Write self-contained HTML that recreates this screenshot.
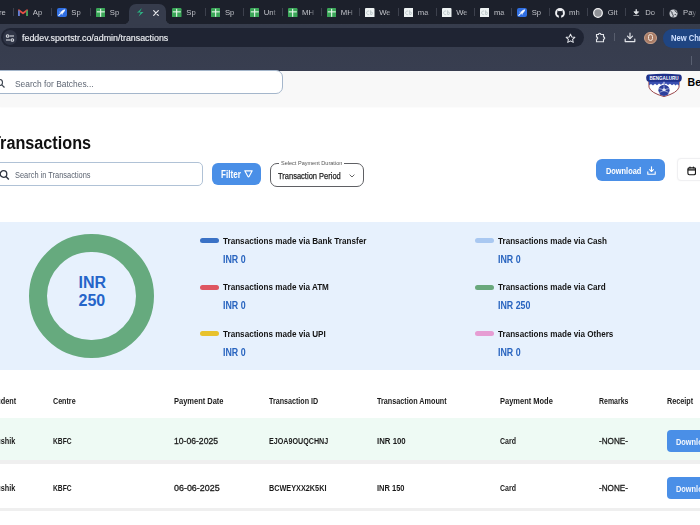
<!DOCTYPE html>
<html><head><meta charset="utf-8">
<style>
*{box-sizing:border-box;margin:0;padding:0}
html,body{width:700px;height:525px;overflow:hidden;background:#fff;font-family:"Liberation Sans",sans-serif;position:relative}
.a{position:absolute}
.t{position:absolute;white-space:nowrap;line-height:1.117;transform-origin:0 0}
.sep{position:absolute;width:1px;top:8.3px;height:7.8px;background:#3d414d}
.fav{position:absolute;top:7px;width:10px;height:10px}
.tl{position:absolute;top:7.6px;font-size:7.7px;line-height:10px;color:#c4c6cc;white-space:nowrap;width:14px;overflow:hidden;-webkit-mask-image:linear-gradient(90deg,#000 55%,transparent 100%)}
.leg{position:absolute;width:19px;height:5px;border-radius:3px}
</style></head><body>
<!-- chrome -->
<div class="a" style="left:0;top:0;width:700px;height:24px;background:#1c202b"></div>
<div class="a" style="left:0;top:24px;width:700px;height:46.5px;background:linear-gradient(#363c4c,#383e50)"></div>
<!-- active tab -->
<div class="a" style="left:128.5px;top:4px;width:37.5px;height:21px;background:#363c4c;border-radius:7px 7px 0 0"></div>
<div class="a" style="left:123.5px;top:19px;width:5px;height:5.2px;background:radial-gradient(circle at 0 0,transparent 4.8px,#363c4c 5.3px)"></div>
<div class="a" style="left:166px;top:19px;width:5px;height:5.2px;background:radial-gradient(circle at 100% 0,transparent 4.8px,#363c4c 5.3px)"></div>
<div class="sep" style="left:12.5px"></div>
<div class="sep" style="left:51px"></div>
<div class="sep" style="left:89.5px"></div>
<div class="sep" style="left:204.6px"></div>
<div class="sep" style="left:243.4px"></div>
<div class="sep" style="left:281.8px"></div>
<div class="sep" style="left:320.5px"></div>
<div class="sep" style="left:358.9px"></div>
<div class="sep" style="left:397.5px"></div>
<div class="sep" style="left:435.9px"></div>
<div class="sep" style="left:473.6px"></div>
<div class="sep" style="left:511.4px"></div>
<div class="sep" style="left:548.8px"></div>
<div class="sep" style="left:587.4px"></div>
<div class="sep" style="left:625px"></div>
<div class="sep" style="left:662.7px"></div>
<svg class="a" style="left:18.3px;top:8.5px" width="10" height="7.5" viewBox="0 0 10 7.5"><path d="M0.9 7V1.2L5 4.3 9.1 1.2V7" fill="none" stroke="#e44f44" stroke-width="1.7" stroke-linejoin="round"/><path d="M0.9 7V1.6" stroke="#5b7fd6" stroke-width="1.8"/><path d="M9.1 7V1.6" stroke="#3aa35a" stroke-width="1.8"/></svg>
<div class="tl" style="left:32.8px">Ap</div>
<svg class="a" style="left:56.8px;top:7.9px" width="10" height="9" viewBox="0 0 10 9"><rect x="0" y="0" width="10" height="9" rx="2" fill="#2f6ee2"/><path d="M8.2 1.2 Q5.6 1.4 4.2 3.4 L3.2 4.6 L5 6.2 L6.2 5.1 Q8.2 3.5 8.2 1.2 Z" fill="#f4f8ff"/><path d="M3.6 5.6 L1.8 7.4" stroke="#f4f8ff" stroke-width="1.1" stroke-linecap="round"/><path d="M3.4 3.6 L2.2 3.8 L2.8 4.8z M5.6 6.1 L5.4 7.2 L4.4 6.6z" fill="#cfdcf8"/></svg>
<div class="tl" style="left:71.3px">Sp</div>
<svg class="a" style="left:95.7px;top:7.7px" width="9.5" height="9.5" viewBox="0 0 9.5 9.5"><rect x="0" y="0" width="9.5" height="9.5" rx="1.2" fill="#3ba759"/><rect x="4.1" y="0.8" width="1.1" height="8" fill="#e8f7ea"/><rect x="0.8" y="3.3" width="8" height="1.1" fill="#e8f7ea"/></svg>
<div class="tl" style="left:109.8px">Sp</div>
<svg class="a" style="left:135.5px;top:7.6px" width="8.5" height="9" viewBox="0 0 8.5 9"><path d="M5.6 0.6L1.2 4.6h3.5L2.6 8.4l4.9-4.3H3.9z" fill="#2fb586"/><path d="M5.6 0.6L1.2 4.6" stroke="#1f8f6a" stroke-width="0.6"/></svg>
<svg class="a" style="left:152.5px;top:9.6px" width="6" height="6" viewBox="0 0 6 6"><path d="M0.7 0.7l4.6 4.6M5.3 0.7l-4.6 4.6" stroke="#e6e7ea" stroke-width="1.2" stroke-linecap="round"/></svg>
<svg class="a" style="left:172.2px;top:7.7px" width="9.5" height="9.5" viewBox="0 0 9.5 9.5"><rect x="0" y="0" width="9.5" height="9.5" rx="1.2" fill="#3ba759"/><rect x="4.1" y="0.8" width="1.1" height="8" fill="#e8f7ea"/><rect x="0.8" y="3.3" width="8" height="1.1" fill="#e8f7ea"/></svg>
<div class="tl" style="left:186.3px">Sp</div>
<svg class="a" style="left:210.8px;top:7.7px" width="9.5" height="9.5" viewBox="0 0 9.5 9.5"><rect x="0" y="0" width="9.5" height="9.5" rx="1.2" fill="#3ba759"/><rect x="4.1" y="0.8" width="1.1" height="8" fill="#e8f7ea"/><rect x="0.8" y="3.3" width="8" height="1.1" fill="#e8f7ea"/></svg>
<div class="tl" style="left:224.9px">Sp</div>
<svg class="a" style="left:249.6px;top:7.7px" width="9.5" height="9.5" viewBox="0 0 9.5 9.5"><rect x="0" y="0" width="9.5" height="9.5" rx="1.2" fill="#3ba759"/><rect x="4.1" y="0.8" width="1.1" height="8" fill="#e8f7ea"/><rect x="0.8" y="3.3" width="8" height="1.1" fill="#e8f7ea"/></svg>
<div class="tl" style="left:263.7px">Unt</div>
<svg class="a" style="left:288.0px;top:7.7px" width="9.5" height="9.5" viewBox="0 0 9.5 9.5"><rect x="0" y="0" width="9.5" height="9.5" rx="1.2" fill="#3ba759"/><rect x="4.1" y="0.8" width="1.1" height="8" fill="#e8f7ea"/><rect x="0.8" y="3.3" width="8" height="1.1" fill="#e8f7ea"/></svg>
<div class="tl" style="left:302.1px">MH</div>
<svg class="a" style="left:326.7px;top:7.7px" width="9.5" height="9.5" viewBox="0 0 9.5 9.5"><rect x="0" y="0" width="9.5" height="9.5" rx="1.2" fill="#3ba759"/><rect x="4.1" y="0.8" width="1.1" height="8" fill="#e8f7ea"/><rect x="0.8" y="3.3" width="8" height="1.1" fill="#e8f7ea"/></svg>
<div class="tl" style="left:340.8px">MH</div>
<svg class="a" style="left:365.0px;top:7.5px" width="9.5" height="9.5" viewBox="0 0 9.5 9.5"><rect x="0" y="0" width="9.5" height="9.5" rx="1" fill="#eef3f4"/><path d="M4.2 3.2a1.8 1.8 0 1 0 0 3.2" fill="none" stroke="#b9c4c7" stroke-width="0.9"/><path d="M5.6 2.3v4.2a1.3 1.3 0 1 0 0-2.4" fill="none" stroke="#b9c4c7" stroke-width="0.9"/></svg>
<div class="tl" style="left:379.2px">We</div>
<svg class="a" style="left:403.6px;top:7.5px" width="9.5" height="9.5" viewBox="0 0 9.5 9.5"><rect x="0" y="0" width="9.5" height="9.5" rx="1" fill="#eef3f4"/><path d="M4.2 3.2a1.8 1.8 0 1 0 0 3.2" fill="none" stroke="#b9c4c7" stroke-width="0.9"/><path d="M5.6 2.3v4.2a1.3 1.3 0 1 0 0-2.4" fill="none" stroke="#b9c4c7" stroke-width="0.9"/></svg>
<div class="tl" style="left:417.8px">ma</div>
<svg class="a" style="left:442.0px;top:7.5px" width="9.5" height="9.5" viewBox="0 0 9.5 9.5"><rect x="0" y="0" width="9.5" height="9.5" rx="1" fill="#eef3f4"/><path d="M4.2 3.2a1.8 1.8 0 1 0 0 3.2" fill="none" stroke="#b9c4c7" stroke-width="0.9"/><path d="M5.6 2.3v4.2a1.3 1.3 0 1 0 0-2.4" fill="none" stroke="#b9c4c7" stroke-width="0.9"/></svg>
<div class="tl" style="left:456.2px">We</div>
<svg class="a" style="left:479.7px;top:7.5px" width="9.5" height="9.5" viewBox="0 0 9.5 9.5"><rect x="0" y="0" width="9.5" height="9.5" rx="1" fill="#eef3f4"/><path d="M4.2 3.2a1.8 1.8 0 1 0 0 3.2" fill="none" stroke="#b9c4c7" stroke-width="0.9"/><path d="M5.6 2.3v4.2a1.3 1.3 0 1 0 0-2.4" fill="none" stroke="#b9c4c7" stroke-width="0.9"/></svg>
<div class="tl" style="left:493.9px">ma</div>
<svg class="a" style="left:517.2px;top:7.9px" width="10" height="9" viewBox="0 0 10 9"><rect x="0" y="0" width="10" height="9" rx="2" fill="#2f6ee2"/><path d="M8.2 1.2 Q5.6 1.4 4.2 3.4 L3.2 4.6 L5 6.2 L6.2 5.1 Q8.2 3.5 8.2 1.2 Z" fill="#f4f8ff"/><path d="M3.6 5.6 L1.8 7.4" stroke="#f4f8ff" stroke-width="1.1" stroke-linecap="round"/><path d="M3.4 3.6 L2.2 3.8 L2.8 4.8z M5.6 6.1 L5.4 7.2 L4.4 6.6z" fill="#cfdcf8"/></svg>
<div class="tl" style="left:531.7px">Sp</div>
<svg class="a" style="left:555.0px;top:7.6px" width="10" height="10" viewBox="0 0 10 10"><circle cx="5" cy="5" r="4.9" fill="#f0f1f4"/><path d="M2.6 2.3 L3.6 3.3 Q5 2.8 6.4 3.3 L7.4 2.3 Q7.8 3.3 7.6 4.2 Q8 4.8 8 5.4 Q8 7.2 6.2 7.6 V10 H3.8 V7.6 Q2 7.2 2 5.4 Q2 4.8 2.4 4.2 Q2.2 3.3 2.6 2.3 Z" fill="#1c202b"/><path d="M1.3 7.4 Q2.5 7.6 3.2 8.6" stroke="#f0f1f4" stroke-width="0.8" fill="none"/></svg>
<div class="tl" style="left:569.1px">mh</div>
<svg class="a" style="left:592.8px;top:7.7px" width="10" height="10" viewBox="0 0 10 10"><circle cx="5" cy="5" r="4.3" fill="#8f9196" stroke="#f2f2f4" stroke-width="1.3"/></svg>
<div class="tl" style="left:607.7px">Git</div>
<svg class="a" style="left:633.0px;top:8.7px" width="6.5" height="7.5" viewBox="0 0 6.5 7.5"><path d="M3.25 0.3v4" stroke="#e4e6ea" stroke-width="1.3"/><path d="M0.9 2.8l2.35 2.5 2.35-2.5z" fill="#e4e6ea" stroke="#e4e6ea" stroke-width="0.8" stroke-linejoin="round"/><rect x="0.4" y="6.4" width="5.7" height="1.1" fill="#e4e6ea"/></svg>
<div class="tl" style="left:645.3px">Do</div>
<svg class="a" style="left:669.3px;top:8.8px" width="9" height="9" viewBox="0 0 9 9"><circle cx="4.5" cy="4.5" r="4" fill="#cfd2d8"/><path d="M1.6 2.6c1.2.2 1.8.9 1.6 1.8-.2.8.8 1.1 1 1.9.1.6-.2 1.3-.4 2M6.2 1c-.4.8-.1 1.4.6 1.6.7.2 1.1.5 1.1 1.1M5.6 5.6c.6-.2 1.3 0 1.7.6" fill="none" stroke="#1c202b" stroke-width="0.9"/></svg>
<div class="tl" style="left:683.0px">Pay</div>
<div class="tl" style="left:-1px;width:10px">re</div>
<!-- omnibox -->
<div class="a" style="left:0.5px;top:28px;width:583px;height:19px;background:#1f2433;border-radius:9.5px"></div>
<div class="a" style="left:2.8px;top:30.3px;width:14.5px;height:14.5px;border-radius:50%;background:#2f3546"></div>
<svg class="a" style="left:5px;top:32.5px" width="10" height="10" viewBox="0 0 10 10"><g stroke="#d5d8de" stroke-width="1.1" fill="none"><line x1="4.6" y1="3" x2="9" y2="3"/><circle cx="2.6" cy="3" r="1.3"/><line x1="1" y1="7" x2="5.4" y2="7"/><circle cx="7.4" cy="7" r="1.3"/></g></svg>
<!-- star -->
<svg class="a" style="left:564.5px;top:32.5px" width="11" height="11" viewBox="0 0 24 24"><path d="M12 2.5l2.9 6.2 6.6.7-4.9 4.5 1.4 6.6L12 17.2l-6 3.3 1.4-6.6-4.9-4.5 6.6-.7z" fill="none" stroke="#e3e5ea" stroke-width="2.2" stroke-linejoin="round"/></svg>
<!-- extension -->
<svg class="a" style="left:593.5px;top:32px" width="12" height="11" viewBox="0 0 12 11"><path d="M2.5 2.5h2a1.2 1.2 0 0 1 2.4 0h2.6v2.4a1.2 1.2 0 0 1 0 2.4v2.4H2.5V7.3a1.2 1.2 0 0 0 0-2.4z" fill="none" stroke="#e3e5ea" stroke-width="1.1"/></svg>
<div class="a" style="left:614px;top:32.5px;width:1px;height:8.5px;background:#585e6d"></div>
<!-- download -->
<svg class="a" style="left:624px;top:32px" width="12" height="11" viewBox="0 0 12 11"><g stroke="#e3e5ea" stroke-width="1.2" fill="none" stroke-linecap="round" stroke-linejoin="round"><line x1="6" y1="1" x2="6" y2="6.5"/><polyline points="3.5,4.2 6,6.7 8.5,4.2"/><polyline points="1.2,7 1.2,9.6 10.8,9.6 10.8,7"/></g></svg>
<!-- avatar -->
<div class="a" style="left:644.2px;top:31.6px;width:12.6px;height:12.6px;border-radius:50%;background:#a97c66;border:1px solid #c9a08a"></div>
<div class="a" style="left:648.2px;top:34.2px;width:5px;height:7px;border:1.3px solid #f3e6dc;border-radius:2.5px"></div>
<!-- new chrome -->
<div class="a" style="left:663.1px;top:29.3px;width:60px;height:18.4px;background:#1f4582;border-radius:9.2px"></div>
<div class="a" style="left:690.5px;top:56px;width:1px;height:8.6px;background:#596071"></div>
<!-- page -->
<div class="a" style="left:0;top:70.5px;width:700px;height:36.5px;background:#f8f8f8;box-shadow:0 0.5px 1.5px rgba(0,0,0,0.04)"></div>
<div class="a" style="left:-20px;top:69.5px;width:303px;height:24.5px;background:#fff;border:1px solid #a4b6cb;border-radius:7px"></div>
<svg class="a" style="left:-4px;top:78.5px" width="10" height="9" viewBox="0 0 10 9"><circle cx="3.5" cy="3.5" r="3" fill="none" stroke="#3d4450" stroke-width="1.1"/><line x1="5.8" y1="5.8" x2="8.5" y2="8.5" stroke="#3d4450" stroke-width="1.2"/></svg>
<svg class="a" style="left:644px;top:70px" width="40" height="30" viewBox="0 0 40 30">
<path d="M4.8 10.5 L5 17.2 Q6.5 22.8 20 26.6 Q33.5 22.8 35 17.2 L35.2 10.5 Z" fill="#fff" stroke="#8f3238" stroke-width="0.9"/>
<path d="M5 10.8 H35 V15.4 L33 14.2 L31.5 15.6 L30 14 L28 15.2 L26 13.8 L24 15 L22 13.4 L20.5 14.8 L19 13.2 L17 14.8 L15 13.5 L13 15.2 L11 13.8 L9 15.4 L7 14 L5 15.2 Z" fill="#3a4fb0"/>
<path d="M4.5 4.6 Q20 2.8 35.5 4.6 Q37.8 4.9 37.8 7.8 Q37.8 11.4 35.5 11.8 H4.5 Q2.2 11.4 2.2 7.8 Q2.2 4.9 4.5 4.6 Z" fill="#1f318a"/>
<text x="20" y="9.9" text-anchor="middle" font-family="Liberation Sans" font-weight="700" font-size="5.3" fill="#ffffff" textLength="29" lengthAdjust="spacingAndGlyphs">BENGALURU</text>
<rect x="19.5" y="11.8" width="1" height="2.6" fill="#e9ecf8"/>
<circle cx="20" cy="20.3" r="5.6" fill="#2d3f9c"/>
<path d="M18.1 19.3 L20 18.1 L21.9 19.3 L21.3 21.3 H18.7 Z" fill="#e6eaf8"/>
<path d="M15.4 22.4 Q17 21.6 18.7 21.3 M24.6 22.4 Q23 21.6 21.3 21.3 M20 18.1 V15.4 M18.1 19.3 L15.2 18.6 M21.9 19.3 L24.8 18.6" stroke="#e6eaf8" stroke-width="0.6" fill="none"/>
</svg>

<!-- filter row -->
<div class="a" style="left:-20px;top:162px;width:222.8px;height:23.5px;border:1px solid #b0c2d6;border-radius:5px;background:#fff"></div>
<svg class="a" style="left:-1px;top:169.5px" width="11" height="10" viewBox="0 0 11 10"><circle cx="4.5" cy="4" r="3.3" fill="none" stroke="#2e3440" stroke-width="1.3"/><line x1="7" y1="6.5" x2="9.8" y2="9.4" stroke="#2e3440" stroke-width="1.4"/></svg>
<div class="a" style="left:211.7px;top:162.6px;width:49.3px;height:22.8px;background:#4a8fe7;border-radius:6px"></div>
<svg class="a" style="left:243.6px;top:169.8px" width="9" height="8" viewBox="0 0 9 8"><path d="M0.8 0.8h7.4L5.2 6.2Q4.5 7.4 3.8 6.2z" fill="none" stroke="#fff" stroke-width="1.15" stroke-linejoin="round"/></svg>
<div class="a" style="left:270.2px;top:163px;width:94.1px;height:23.5px;border:1.2px solid #5f6064;border-radius:7px"></div>
<div class="a" style="left:279px;top:161px;width:65px;height:4px;background:#fff"></div>
<svg class="a" style="left:348.5px;top:174px" width="6" height="4" viewBox="0 0 6 4"><polyline points="0.6,0.6 3,3 5.4,0.6" fill="none" stroke="#666" stroke-width="1"/></svg>
<div class="a" style="left:596.3px;top:159.4px;width:68.3px;height:21.6px;background:#4a8fe7;border-radius:6px"></div>
<svg class="a" style="left:646.5px;top:165.5px" width="9" height="9" viewBox="0 0 9 9"><g stroke="#fff" stroke-width="1.1" fill="none" stroke-linecap="round" stroke-linejoin="round"><line x1="4.5" y1="0.8" x2="4.5" y2="5.3"/><polyline points="2.6,3.6 4.5,5.5 6.4,3.6"/><polyline points="0.8,5.8 0.8,8.2 8.2,8.2 8.2,5.8"/></g></svg>
<div class="a" style="left:677.2px;top:158.4px;width:40px;height:23px;background:#fff;border:1px solid #f0f0f2;border-radius:4px;box-shadow:0 0 1.5px rgba(0,0,0,0.05)"></div>
<svg class="a" style="left:686.8px;top:166px" width="9.5" height="9.5" viewBox="0 0 9.5 9.5"><g stroke="#151515" fill="none"><rect x="0.9" y="1.9" width="7.6" height="6.8" rx="1.4" stroke-width="1.15"/><line x1="0.9" y1="3.9" x2="8.5" y2="3.9" stroke-width="1.3"/><line x1="3" y1="0.6" x2="3" y2="2.4" stroke-width="1"/><line x1="6.4" y1="0.6" x2="6.4" y2="2.4" stroke-width="1"/></g></svg>
<!-- summary panel -->
<div class="a" style="left:0;top:222px;width:700px;height:148.2px;background:#e7f1fd"></div>
<div class="a" style="left:29.4px;top:233.6px;width:124.7px;height:124.7px;border-radius:50%;background:transparent;border:18.7px solid #66aa7e"></div>
<div class="leg" style="left:199.5px;top:238px;background:#3a72c6"></div>
<div class="leg" style="left:199.5px;top:284.7px;background:#de5661"></div>
<div class="leg" style="left:199.5px;top:331px;background:#e8c22d"></div>
<div class="leg" style="left:474.8px;top:238px;background:#a9c8f1"></div>
<div class="leg" style="left:474.8px;top:284.7px;background:#69a87c"></div>
<div class="leg" style="left:474.8px;top:331px;background:#e69dd3"></div>
<!-- table -->
<div class="a" style="left:0;top:418.2px;width:700px;height:42px;background:#eefaf4"></div>
<div class="a" style="left:0;top:460.2px;width:700px;height:3.8px;background:#efefef"></div>
<div class="a" style="left:0;top:508.2px;width:700px;height:3px;background:#efefef"></div>
<div class="a" style="left:666.5px;top:429.8px;width:50px;height:22.6px;background:#4a8fe7;border-radius:4px"></div>
<div class="a" style="left:666.5px;top:476.8px;width:50px;height:22.6px;background:#4a8fe7;border-radius:4px"></div>
<span class="t" style="left:22px;top:33.16px;font-size:9px;font-weight:400;color:#eceef2;transform:scaleX(0.9858);-webkit-text-stroke:0.15px #eceef2">feddev.sportstr.co/admin/transactions</span>
<span class="t" style="left:671px;top:32.80px;font-size:9.5px;font-weight:700;color:#cfe0ff;transform:scaleX(0.80)">New Chrome</span>
<span class="t" style="left:15px;top:77.64px;font-size:9.9px;font-weight:400;color:#5e6673;transform:scaleX(0.8524);">Search for Batches...</span>
<span class="t" style="left:687.6px;top:77.01px;font-size:10.6px;font-weight:700;color:#000;">Ben</span>
<span class="t" style="left:-10.5px;top:133.11px;font-size:18px;font-weight:700;color:#111;transform:scaleX(0.90);transform-origin:11px 0">Transactions</span>
<span class="t" style="left:15px;top:169.95px;font-size:9px;font-weight:400;color:#5b6370;transform:scaleX(0.8254);">Search in Transactions</span>
<span class="t" style="left:221.4px;top:168.85px;font-size:10px;font-weight:700;color:#fff;transform:scaleX(0.8099);">Filter</span>
<span class="t" style="left:280.7px;top:160.17px;font-size:6px;font-weight:400;color:#555;transform:scaleX(0.9237);">Select Payment Duration</span>
<span class="t" style="left:278.4px;top:170.87px;font-size:9.2px;font-weight:400;color:#222;transform:scaleX(0.8180);-webkit-text-stroke:0.25px #222">Transaction Period</span>
<span class="t" style="left:605.7px;top:166.16px;font-size:9px;font-weight:700;color:#fff;transform:scaleX(0.8210);">Download</span>
<span class="t" style="left:676px;top:437.06px;font-size:9px;font-weight:700;color:#f2f6fd;transform:scaleX(0.8210);">Download</span>
<span class="t" style="left:676px;top:483.75px;font-size:9px;font-weight:700;color:#f2f6fd;transform:scaleX(0.8210);">Download</span>
<span class="t" style="left:78.5px;top:274.12px;font-size:16px;font-weight:700;color:#2565c9;">INR</span>
<span class="t" style="left:78.5px;top:291.52px;font-size:16px;font-weight:700;color:#2565c9;">250</span>
<span class="t" style="left:223.1px;top:235.62px;font-size:9.7px;font-weight:700;color:#141414;transform:scaleX(0.8369);">Transactions made via Bank Transfer</span>
<span class="t" style="left:223.1px;top:253.67px;font-size:10.2px;font-weight:700;color:#2864bf;transform:scaleX(0.8679);">INR 0</span>
<span class="t" style="left:223.1px;top:282.32px;font-size:9.7px;font-weight:700;color:#141414;transform:scaleX(0.8369);">Transactions made via ATM</span>
<span class="t" style="left:223.1px;top:300.37px;font-size:10.2px;font-weight:700;color:#2864bf;transform:scaleX(0.8679);">INR 0</span>
<span class="t" style="left:223.1px;top:328.92px;font-size:9.7px;font-weight:700;color:#141414;transform:scaleX(0.8369);">Transactions made via UPI</span>
<span class="t" style="left:223.1px;top:346.97px;font-size:10.2px;font-weight:700;color:#2864bf;transform:scaleX(0.8679);">INR 0</span>
<span class="t" style="left:498px;top:235.62px;font-size:9.7px;font-weight:700;color:#141414;transform:scaleX(0.8369);">Transactions made via Cash</span>
<span class="t" style="left:498px;top:253.67px;font-size:10.2px;font-weight:700;color:#2864bf;transform:scaleX(0.8679);">INR 0</span>
<span class="t" style="left:498px;top:282.32px;font-size:9.7px;font-weight:700;color:#141414;transform:scaleX(0.8369);">Transactions made via Card</span>
<span class="t" style="left:498px;top:300.37px;font-size:10.2px;font-weight:700;color:#2864bf;transform:scaleX(0.8679);">INR 250</span>
<span class="t" style="left:498px;top:328.92px;font-size:9.7px;font-weight:700;color:#141414;transform:scaleX(0.8369);">Transactions made via Others</span>
<span class="t" style="left:498px;top:346.97px;font-size:10.2px;font-weight:700;color:#2864bf;transform:scaleX(0.8679);">INR 0</span>
<span class="t" style="left:-10.98px;top:397.32px;font-size:8.6px;font-weight:700;color:#1a1a1a;transform:scaleX(0.8499);">Student</span>
<span class="t" style="left:53.1px;top:397.32px;font-size:8.6px;font-weight:700;color:#1a1a1a;transform:scaleX(0.8303);">Centre</span>
<span class="t" style="left:174px;top:397.32px;font-size:8.6px;font-weight:700;color:#1a1a1a;transform:scaleX(0.8709);">Payment Date</span>
<span class="t" style="left:269.1px;top:397.32px;font-size:8.6px;font-weight:700;color:#1a1a1a;transform:scaleX(0.8309);">Transaction ID</span>
<span class="t" style="left:377.1px;top:397.32px;font-size:8.6px;font-weight:700;color:#1a1a1a;transform:scaleX(0.8414);">Transaction Amount</span>
<span class="t" style="left:500px;top:397.32px;font-size:8.6px;font-weight:700;color:#1a1a1a;transform:scaleX(0.8706);">Payment Mode</span>
<span class="t" style="left:599.4px;top:397.32px;font-size:8.6px;font-weight:700;color:#1a1a1a;transform:scaleX(0.8097);">Remarks</span>
<span class="t" style="left:666.5px;top:397.32px;font-size:8.6px;font-weight:700;color:#1a1a1a;transform:scaleX(0.8440);">Receipt</span>
<span class="t" style="left:-13.21px;top:436.52px;font-size:8.6px;font-weight:700;color:#1a1a1a;transform:scaleX(0.8499);">Kaushik</span>
<span class="t" style="left:53.1px;top:436.52px;font-size:8.6px;font-weight:700;color:#1a1a1a;transform:scaleX(0.7835);">KBFC</span>
<span class="t" style="left:174px;top:437.03px;font-size:8.7px;font-weight:400;color:#1a1a1a;transform:scaleX(0.9901);-webkit-text-stroke:0.28px #1a1a1a">10-06-2025</span>
<span class="t" style="left:269.1px;top:436.52px;font-size:8.6px;font-weight:700;color:#1a1a1a;transform:scaleX(0.8320);">EJOA9OUQCHNJ</span>
<span class="t" style="left:377.1px;top:436.52px;font-size:8.6px;font-weight:700;color:#1a1a1a;transform:scaleX(0.9104);">INR 100</span>
<span class="t" style="left:500px;top:436.52px;font-size:8.6px;font-weight:700;color:#1a1a1a;transform:scaleX(0.8121);">Card</span>
<span class="t" style="left:599.4px;top:437.03px;font-size:8.7px;font-weight:400;color:#1a1a1a;transform:scaleX(0.9389);-webkit-text-stroke:0.28px #1a1a1a">-NONE-</span>
<span class="t" style="left:-13.21px;top:483.92px;font-size:8.6px;font-weight:700;color:#1a1a1a;transform:scaleX(0.8499);">Kaushik</span>
<span class="t" style="left:53.1px;top:483.92px;font-size:8.6px;font-weight:700;color:#1a1a1a;transform:scaleX(0.7835);">KBFC</span>
<span class="t" style="left:174px;top:484.43px;font-size:8.7px;font-weight:400;color:#1a1a1a;transform:scaleX(1.0261);-webkit-text-stroke:0.28px #1a1a1a">06-06-2025</span>
<span class="t" style="left:269.1px;top:483.92px;font-size:8.6px;font-weight:700;color:#1a1a1a;transform:scaleX(0.8465);">BCWEYXX2K5KI</span>
<span class="t" style="left:377.1px;top:483.92px;font-size:8.6px;font-weight:700;color:#1a1a1a;transform:scaleX(0.8723);">INR 150</span>
<span class="t" style="left:500px;top:483.92px;font-size:8.6px;font-weight:700;color:#1a1a1a;transform:scaleX(0.8121);">Card</span>
<span class="t" style="left:599.4px;top:484.43px;font-size:8.7px;font-weight:400;color:#1a1a1a;transform:scaleX(0.9389);-webkit-text-stroke:0.28px #1a1a1a">-NONE-</span>
</body></html>
